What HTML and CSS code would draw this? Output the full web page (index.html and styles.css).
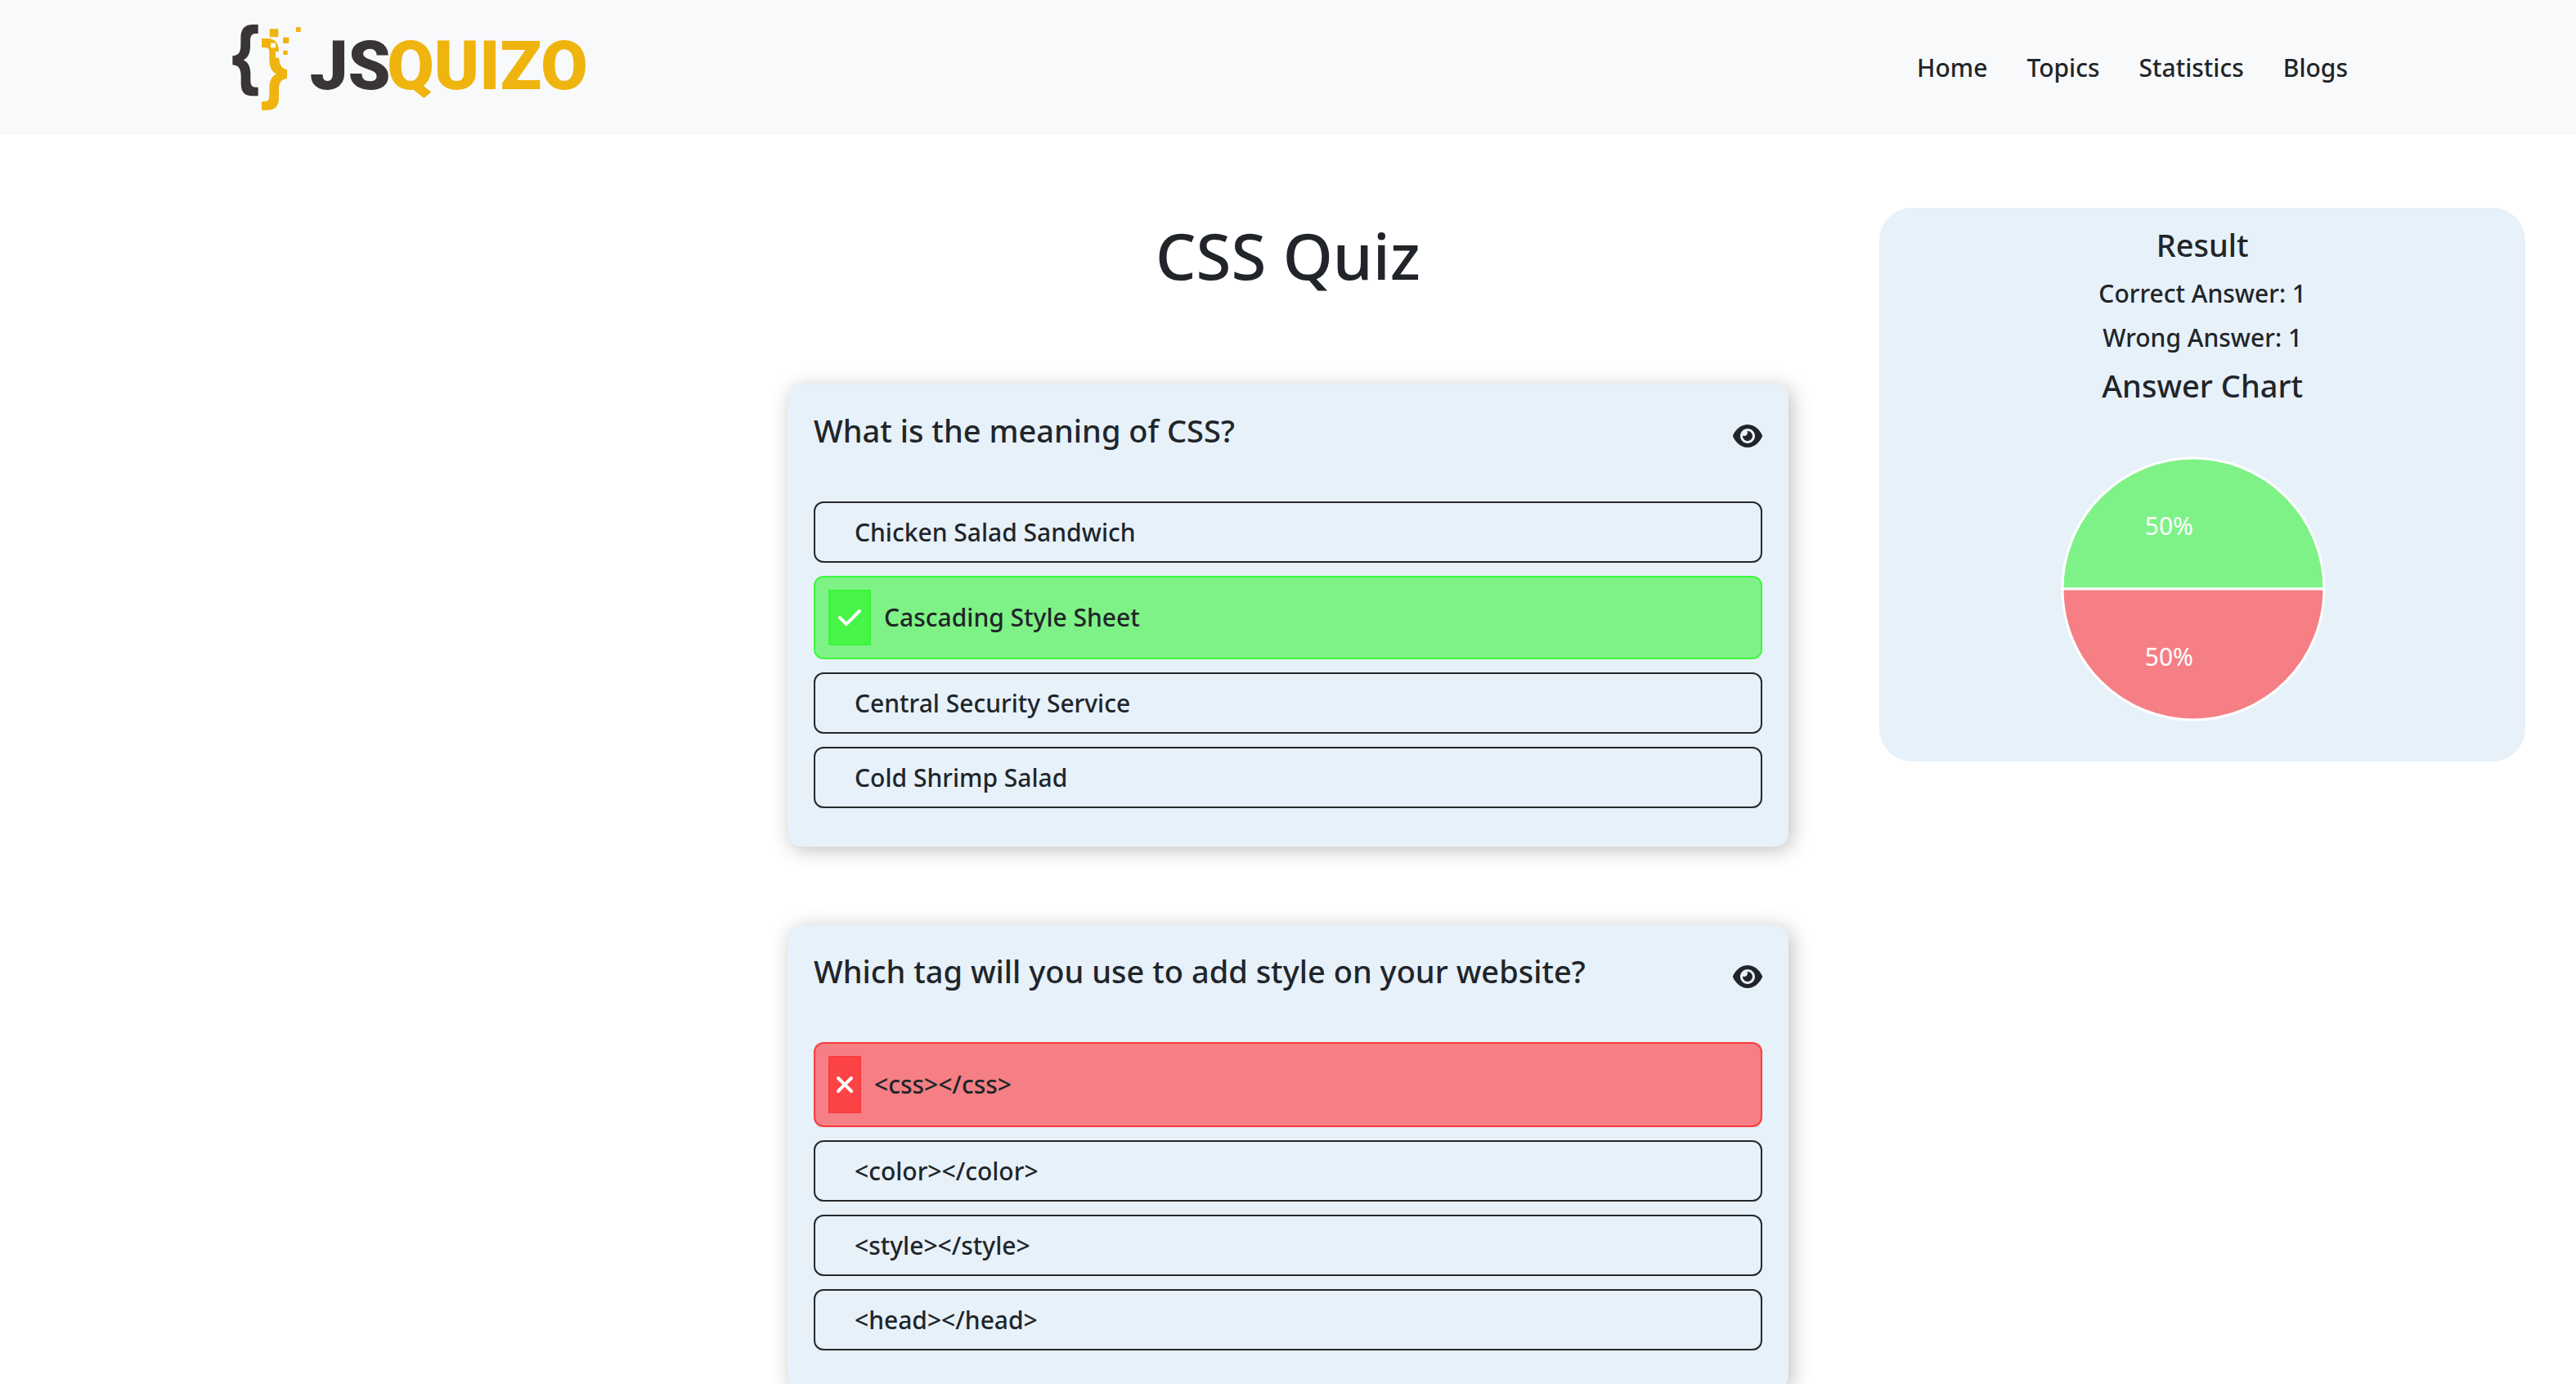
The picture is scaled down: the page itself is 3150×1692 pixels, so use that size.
FILE: index.html
```html
<!DOCTYPE html>
<html lang="en">
<head>
<meta charset="utf-8">
<meta name="viewport" content="width=device-width, initial-scale=1">
<title>JSQuizo - CSS Quiz</title>
<link rel="stylesheet" href="styles.css">
</head>
<body>
<svg class="sprite" aria-hidden="true">
  <symbol id="eye" viewBox="0 0 576 512"><path d="M288 32c-80.8 0-145.5 36.8-192.6 80.6C48.6 156 17.3 208 2.5 243.7c-3.3 7.9-3.3 16.7 0 24.6C17.3 304 48.6 356 95.4 399.4C142.5 443.2 207.2 480 288 480s145.5-36.8 192.6-80.6c46.8-43.5 78.1-95.4 93-131.1c3.3-7.9 3.3-16.7 0-24.6c-14.9-35.7-46.2-87.7-93-131.1C433.5 68.8 368.8 32 288 32zM432 256c0 79.5-64.5 144-144 144s-144-64.5-144-144s64.5-144 144-144s144 64.5 144 144zM288 192c0 35.3-28.7 64-64 64c-11.5 0-22.3-3-31.6-8.4c-.2 2.8-.4 5.5-.4 8.4c0 53 43 96 96 96s96-43 96-96s-43-96-96-96c-2.8 0-5.6 .1-8.4 .4c5.3 9.3 8.4 20.1 8.4 31.6z"/></symbol>
  <symbol id="check" viewBox="0 0 448 512"><path d="M438.6 105.4c12.5 12.5 12.5 32.8 0 45.3l-256 256c-12.5 12.5-32.8 12.5-45.3 0l-128-128c-12.5-12.5-12.5-32.8 0-45.3s32.8-12.5 45.3 0L160 338.7 393.4 105.4c12.5-12.5 32.8-12.5 45.3 0z"/></symbol>
  <symbol id="xmark" viewBox="0 0 320 512"><path d="M310.6 150.6c12.5-12.5 12.5-32.8 0-45.3s-32.8-12.5-45.3 0L160 210.7 54.6 105.4c-12.5-12.5-32.8-12.5-45.3 0s-12.5 32.8 0 45.3L114.7 256 9.4 361.4c-12.5 12.5-12.5 32.8 0 45.3s32.8 12.5 45.3 0L160 301.3 265.4 406.6c12.5 12.5 32.8 12.5 45.3 0s12.5-32.8 0-45.3L205.3 256 310.6 150.6z"/></symbol>
</svg>

<header class="site-header">
  <div class="container">
    <a class="brand" href="#" aria-label="JSQuizo">
      <svg class="logo" viewBox="72 84 1302 330">
        <path class="logo-dark" d="M167 90H150C115 90 103 108 103 140V165C103 192 95 204 73 205V238C95 240 103 250 104 278V305C104 340 118 352 150 352H167V320H160C142 320 139 310 139 290V272C139 245 130 228 113 220C130 212 138 195 138 168V150C138 130 145 123 160 123H167Z"/>
        <path class="logo-gold" fill-rule="evenodd" d="M180 141H205C230 143 243 160 243 189H231V212H244C244 235 255 252 273 255V288C252 290 243 302 243 330V358C243 390 230 404 200 404H180V372H190C205 372 208 365 208 345V325C208 298 216 280 234 271C216 262 208 245 208 215V190C208 178 202 174 190 174H180ZM213 158V175H231V158Z"/>
        <path class="logo-gold" d="M209 106h32v30h-32zM258 137h22v22h-22zM306 100h17v17h-17zM259 185h16v16h-16z"/>
        <text class="logo-text logo-dark" x="356" y="327">JS</text>
        <text class="logo-text logo-gold" x="640" y="327">QUIZO</text>
      </svg>
    </a>
    <nav class="nav">
      <a href="#">Home</a>
      <a href="#">Topics</a>
      <a href="#">Statistics</a>
      <a href="#">Blogs</a>
    </nav>
  </div>
</header>

<main class="page">
  <div class="quiz">
    <h1 class="title">CSS Quiz</h1>

    <section class="card">
      <div class="question">
        <h2>What is the meaning of CSS?</h2>
        <button class="reveal" type="button" aria-label="Show answer"><svg class="icon-eye"><use href="#eye"/></svg></button>
      </div>
      <div class="options">
        <button class="option" type="button">Chicken Salad Sandwich</button>
        <button class="option correct" type="button"><span class="mark"><svg class="icon-check"><use href="#check"/></svg></span>Cascading Style Sheet</button>
        <button class="option" type="button">Central Security Service</button>
        <button class="option" type="button">Cold Shrimp Salad</button>
      </div>
    </section>

    <section class="card">
      <div class="question">
        <h2>Which tag will you use to add style on your website?</h2>
        <button class="reveal" type="button" aria-label="Show answer"><svg class="icon-eye"><use href="#eye"/></svg></button>
      </div>
      <div class="options">
        <button class="option wrong" type="button"><span class="mark"><svg class="icon-xmark"><use href="#xmark"/></svg></span>&lt;css&gt;&lt;/css&gt;</button>
        <button class="option" type="button">&lt;color&gt;&lt;/color&gt;</button>
        <button class="option" type="button">&lt;style&gt;&lt;/style&gt;</button>
        <button class="option" type="button">&lt;head&gt;&lt;/head&gt;</button>
      </div>
    </section>
  </div>

  <aside class="result">
    <h3>Result</h3>
    <p>Correct Answer: 1</p>
    <p>Wrong Answer: 1</p>
    <h3>Answer Chart</h3>
    <svg class="pie" viewBox="0 0 400 400" role="img" aria-label="Answers: 50% correct, 50% wrong">
      <path class="slice-correct" d="M29 200A160 160 0 0 1 349 200Z"/>
      <path class="slice-wrong" d="M349 200A160 160 0 0 1 29 200Z"/>
      <text x="189" y="134">50%</text>
      <text x="189" y="294">50%</text>
    </svg>
  </aside>
</main>
</body>
</html>
```

FILE: styles.css
```css
* {
  box-sizing: border-box;
}

body {
  margin: 0;
  background: #fff;
  color: #212529;
  font-family: "Noto Sans", "Open Sans", sans-serif;
  font-size: 30px;
  font-weight: 500;
  line-height: 42px;
}

h1, h2, h3, p {
  margin: 0;
  font-weight: 500;
}

button {
  font: inherit;
  color: inherit;
}

svg {
  display: block;
}

.sprite {
  display: none;
}

.site-header {
  background: #f8f9fb;
}

.container {
  display: flex;
  align-items: center;
  justify-content: space-between;
  max-width: 2640px;
  margin: 0 auto;
  padding: 28px 24px 27px 29px;
}

.logo {
  width: 434px;
  height: 110px;
}

.logo-dark {
  fill: #393435;
}

.logo-gold {
  fill: #efb40e;
}

.logo-text {
  font-family: Roboto, sans-serif;
  font-size: 250px;
  font-weight: 900;
}

.nav {
  display: flex;
  gap: 48px;
}

.nav a {
  color: inherit;
  text-decoration: none;
}

.page {
  display: grid;
  grid-template-columns: 1fr minmax(0, 1224px) 1fr;
  align-items: start;
  padding: 89px 0 96px;
}

.quiz {
  grid-column: 2;
  display: flex;
  flex-direction: column;
  gap: 96px;
}

.title {
  padding: 8px 0 12px;
  font-size: 78px;
  line-height: 100px;
  text-align: center;
}

.card {
  padding: 28px 32px 47px;
  border-radius: 16px;
  background: #e7f1fa;
  box-shadow: 4px 4px 24px rgba(0, 0, 0, 0.25);
}

.question {
  display: flex;
  justify-content: space-between;
  align-items: flex-start;
  margin-bottom: 59px;
}

.question h2 {
  font-size: 38px;
  line-height: 56px;
}

.reveal {
  padding: 19px 0 0;
  border: 0;
  background: none;
}

.icon-eye {
  width: 36px;
  height: 32px;
  fill: #212529;
}

.options {
  display: flex;
  flex-direction: column;
  gap: 16px;
}

.option {
  display: flex;
  align-items: center;
  padding: 15px 48px 14px;
  border: 2px solid #25282b;
  border-radius: 12px;
  background: none;
  text-align: left;
}

.option.correct,
.option.wrong {
  gap: 16px;
  padding: 15px 16px;
}

.option.correct {
  border-color: #3cf83c;
  background: #7ef286;
}

.option.wrong {
  border-color: #fb3c3e;
  background: #f57f84;
}

.mark {
  padding: 16px 10px;
  border: 2px solid;
}

.correct .mark {
  border-color: #3af53c;
  background: #46f548;
}

.wrong .mark {
  padding: 17px 8px;
  border-color: #fb3a3c;
  background: #fc4446;
}

.mark svg {
  height: 32px;
  fill: #fff;
}

.icon-check {
  width: 28px;
}

.icon-xmark {
  width: 20px;
}

.result {
  grid-column: 3;
  justify-self: end;
  width: 82%;
  margin-right: 62px;
  padding: 20px 0 11px;
  border-radius: 40px;
  background: #e7f1fa;
  text-align: center;
}

.result h3 {
  margin-bottom: 14px;
  font-size: 38px;
  line-height: 50px;
}

.result p {
  margin-bottom: 12px;
}

.pie {
  width: 400px;
  height: 400px;
  margin: 24px auto 0;
}

.pie path {
  stroke: #fff;
  stroke-width: 3;
}

.slice-correct {
  fill: #7ef286;
}

.slice-wrong {
  fill: #f57f84;
}

.pie text {
  fill: #fff;
  font-weight: 400;
  text-anchor: end;
}
```
